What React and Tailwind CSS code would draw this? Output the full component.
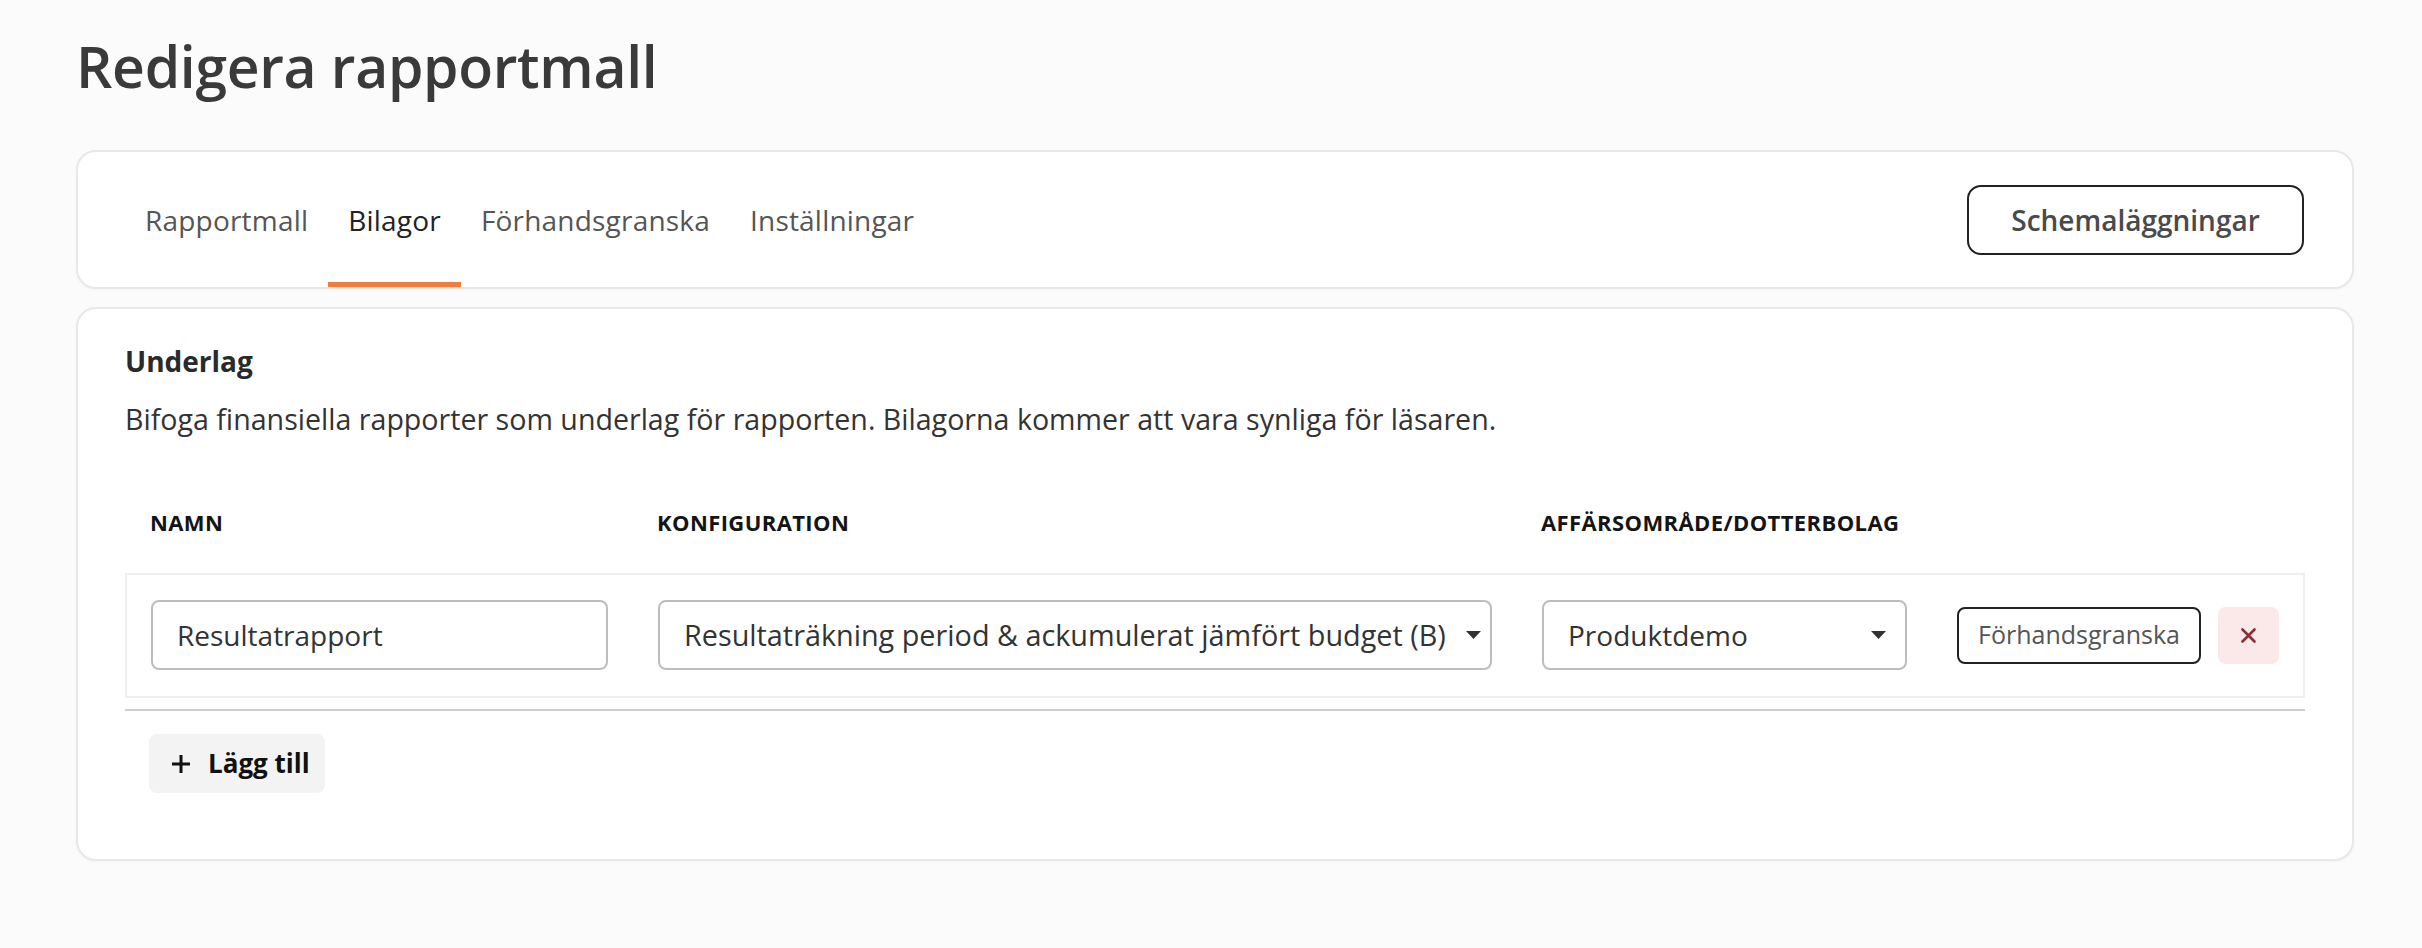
import React from 'react';

const tabs = ['Rapportmall', 'Bilagor', 'Förhandsgranska', 'Inställningar'];

const font = '"Open Sans", "Noto Sans", sans-serif';

const Caret = () => (
  <svg width="15" height="8" viewBox="0 0 15 8" className="shrink-0">
    <path d="M0 0h15L7.5 8z" fill="#333" />
  </svg>
);

const App = () => {
  return (
    <div
      className="min-h-screen bg-[#fbfbfb] pl-[76px] pr-[68px] pt-[38px] pb-[80px]"
      style={{ fontFamily: font }}
    >
      <h1 className="text-[57px] leading-none font-semibold tracking-[-0.3px] text-[#3a3a3a]">Redigera rapportmall</h1>

      {/* tab bar */}
      <div className="mt-[55px] h-[139px] flex items-stretch justify-between rounded-[20px] border-2 border-[#e8e8e8] bg-white px-[47px] shadow-[0_1px_3px_rgba(0,0,0,0.03)]">
        <div className="flex items-stretch">
          {tabs.map((t) => (
            <div
              key={t}
              className={
                t === 'Bilagor'
                  ? 'flex items-center px-[20px] border-y-[5px] border-t-transparent border-b-[#f07d3a] text-[28px] tracking-[0.2px] text-[#222]'
                  : 'flex items-center px-[20px] border-y-[5px] border-transparent text-[28px] tracking-[0.2px] text-[#555]'
              }
            >
              {t}
            </div>
          ))}
        </div>
        <div className="self-center mr-[1px] flex items-center justify-center h-[70px] w-[337px] rounded-[14px] border-2 border-[#222] text-[28px] font-semibold text-[#4a4a4a]">
          Schemaläggningar
        </div>
      </div>

      {/* attachments */}
      <div className="mt-[18px] rounded-[20px] border-2 border-[#e8e8e8] bg-white px-[47px] pt-[36px] pb-[66px] shadow-[0_1px_3px_rgba(0,0,0,0.03)]">
        <h2 className="text-[28px] leading-[32px] font-bold text-[#2a2a2a]">Underlag</h2>
        <p className="mt-[26px] text-[28.6px] leading-[32px] text-[#333]">
          Bifoga finansiella rapporter som underlag för rapporten. Bilagorna kommer att vara synliga för läsaren.
        </p>

        <div className="mt-[74px] pl-[25px] grid grid-cols-[457px_834px_365px_1fr] gap-x-[50px] text-[22px] leading-[26px] font-bold tracking-[0.4px] text-[#141414]">
          <div>NAMN</div>
          <div>KONFIGURATION</div>
          <div>AFFÄRSOMRÅDE/DOTTERBOLAG</div>
          <div />
        </div>

        <div className="mt-[38px] border-2 border-[#efefef] pl-[24px] pr-[24px] pt-[25px] pb-[26px] grid grid-cols-[457px_834px_365px_1fr] gap-x-[50px] items-center">
          <input
            defaultValue="Resultatrapport"
            className="h-[70px] w-full rounded-[8px] border-2 border-[#bdbdbd] px-[24px] text-[28px] text-[#333] outline-none"
            style={{ fontFamily: font }}
          />
          <div className="h-[70px] flex items-center justify-between rounded-[8px] border-2 border-[#bdbdbd] pl-[24px] pr-[9px] text-[28.8px] text-[#333]">
            <span className="whitespace-nowrap">Resultaträkning period &amp; ackumulerat jämfört budget (B)</span>
            <Caret />
          </div>
          <div className="h-[70px] flex items-center justify-between rounded-[8px] border-2 border-[#bdbdbd] pl-[24px] pr-[19px] text-[28px] text-[#333]">
            <span>Produktdemo</span>
            <Caret />
          </div>
          <div className="flex items-center gap-[17px]">
            <div className="h-[57px] w-[244px] flex items-center justify-center rounded-[8px] border-2 border-[#222] text-[25px] font-medium text-[#555]">
              Förhandsgranska
            </div>
            <div className="h-[57px] w-[61px] flex items-center justify-center rounded-[8px] bg-[#fbe8e9]">
              <svg width="15" height="15" viewBox="0 0 15 15">
                <path d="M1.5 1.5l12 12M13.5 1.5l-12 12" stroke="#8d2b36" strokeWidth="2.6" strokeLinecap="round" />
              </svg>
            </div>
          </div>
        </div>

        <div className="mt-[11px] h-[2px] bg-[#cfcfcf]" />

        <div className="mt-[23px] ml-[24px] h-[59px] w-[176px] flex items-center gap-[17px] pl-[22px] rounded-[8px] bg-[#f3f3f3] text-[26px] font-bold text-[#111]">
          <svg width="20" height="20" viewBox="0 0 20 20" className="shrink-0">
            <path d="M10 1v18M1 10h18" stroke="#111" strokeWidth="3" />
          </svg>
          <span>Lägg till</span>
        </div>
      </div>
    </div>
  );
};

export default App;
